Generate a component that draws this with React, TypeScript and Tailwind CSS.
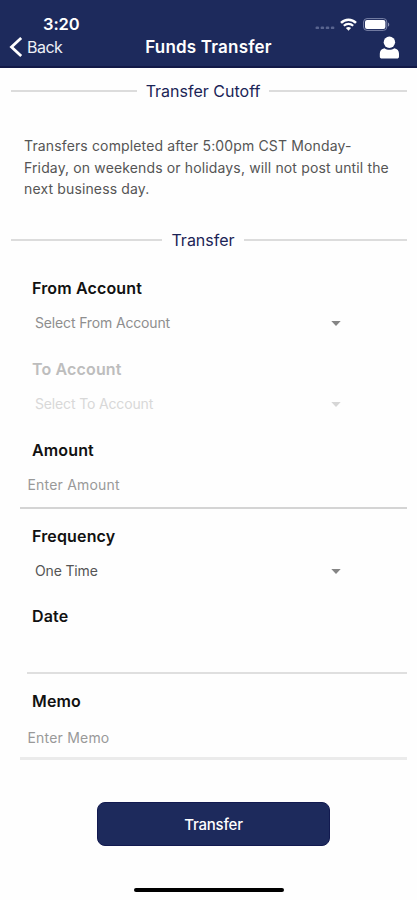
import type { ReactNode } from "react"
import { clsx } from "clsx"

const NOTICE_LINES = [
  "Transfers completed after 5:00pm CST Monday-",
  "Friday, on weekends or holidays, will not post until the",
  "next business day.",
]

function StatusBar() {
  return (
    <div className="flex h-8 items-end justify-between pr-[27px] pl-[43px]">
      <span className="text-[16.5px] leading-4 font-semibold tracking-[-0.1px]">3:20</span>
      <div className="flex h-4 items-center">
        <svg width="20" height="4" viewBox="0 0 20 4" className="mt-2 mr-[5px]" fill="#59648f">
          <rect x="0.5" y="0.5" width="3.6" height="2.6" rx="1.2" />
          <rect x="5.6" y="0.5" width="3.6" height="2.6" rx="1.2" />
          <rect x="10.7" y="0.5" width="3.6" height="2.6" rx="1.2" />
          <rect x="15.8" y="0.5" width="3.6" height="2.6" rx="1.2" />
        </svg>
        <svg width="17" height="13" viewBox="0 0 17 13" fill="none" stroke="#fff" strokeWidth="2.5">
          <path d="M1 4.9C5.2 0.7 11.8 0.7 16 4.9" />
          <path d="M3.8 7.8c2.7-2.6 6.7-2.6 9.4 0" strokeWidth="2.1" />
          <path d="M8.5 12.7 5.9 10c1.5-1.3 3.7-1.3 5.2 0z" fill="#fff" stroke="none" />
        </svg>
        <svg width="27" height="13" viewBox="0 0 27 13" className="ml-[6px]">
          <rect x="0.6" y="0.6" width="23.2" height="11.8" rx="3.4" fill="none" stroke="#7b84a8" />
          <rect x="2" y="2" width="20.4" height="9" rx="2" fill="#fff" />
          <path d="M25 4.4c1.7.6 1.7 3.6 0 4.2z" fill="#8d95b4" />
        </svg>
      </div>
    </div>
  )
}

function NavBar() {
  return (
    <div className="grid h-[30px] grid-cols-[110px_1fr_110px] items-center">
      <button className="flex items-center gap-1 pl-[9px] text-[16px] tracking-[-0.5px] text-[#eef0f6]">
        <svg width="14" height="20" viewBox="0 0 14 20" fill="none" stroke="#fff" strokeWidth="2.8">
          <path d="M12.2 1 2.5 10l9.7 9" />
        </svg>
        Back
      </button>
      <h1 className="pt-[2px] text-center text-[17px] font-semibold tracking-[0.2px]">
        Funds Transfer
      </h1>
      <button className="flex justify-end pr-[17px]" aria-label="Profile">
        <svg width="21" height="23" viewBox="0 0 21 23" fill="#fff">
          <circle cx="10.4" cy="6.2" r="5.7" />
          <path d="M5.500 12.200c2.800 2 7 2 9.800 0 3 .4 4.700 2.700 4.700 5.600v2.600c0 1.400-.8 2.100-2.200 2.100H3c-1.400 0-2.200-.7-2.200-2.100v-2.600c0-2.900 1.700-5.200 4.700-5.600z" />
        </svg>
      </button>
    </div>
  )
}

// The title sits slightly left of centre, so the right rule gets the extra width.
function SectionTitle({ children }: { children: ReactNode }) {
  return (
    <div className="flex h-6 items-center gap-[9px] pr-[10px] pl-[11px] text-[16px] text-[#1b2456]">
      <span className="h-[2px] grow basis-0 bg-[#dcdcdc]" />
      <h2>{children}</h2>
      <span className="h-[2px] grow basis-3 bg-[#dcdcdc]" />
    </div>
  )
}

function FieldLabel({ children, disabled }: { children: ReactNode; disabled?: boolean }) {
  return (
    <div
      className={clsx(
        "h-6 pt-px pl-8 text-[16px] leading-6 font-semibold tracking-[0.15px]",
        disabled ? "text-[#bdbdbd]" : "text-[#111]",
      )}
    >
      {children}
    </div>
  )
}

function Select({ value, tone }: { value: string; tone: "placeholder" | "disabled" | "filled" }) {
  return (
    <div
      className={clsx(
        "mt-[13px] flex h-5 items-center justify-between pr-[76px] pl-[35px] text-[14px] tracking-[-0.15px]",
        tone === "placeholder" && "text-[#8e8e8e]",
        tone === "disabled" && "text-[#d8d8d8]",
        tone === "filled" && "text-[#555]",
      )}
    >
      <span>{value}</span>
      <svg
        width="10"
        height="5"
        viewBox="0 0 10 5"
        className="mt-[3px]"
        fill={tone === "disabled" ? "#d6d6d6" : "#858585"}
      >
        <path d="M0.300 0h9.400L5 5z" />
      </svg>
    </div>
  )
}

export default function App() {
  return (
    <main className="flex h-[900px] w-[417px] flex-col bg-[#fefefe] font-['Inter',sans-serif]">
      <header className="h-[68px] border-b-2 border-[#121947] bg-[#1d2a5c] text-white">
        <StatusBar />
        <NavBar />
      </header>

      <section className="pt-[11px]">
        <SectionTitle>Transfer Cutoff</SectionTitle>
        <p className="mt-8 pl-6 text-[14px] leading-[21.5px] tracking-[0.14px] whitespace-nowrap text-[#555]">
          {NOTICE_LINES.map((line) => (
            <span key={line} className="block">
              {line}
            </span>
          ))}
        </p>
      </section>

      <section className="pt-[28.5px]">
        <SectionTitle>Transfer</SectionTitle>

        <div className="mt-[23px]">
          <FieldLabel>From Account</FieldLabel>
          <Select value="Select From Account" tone="placeholder" />
        </div>
        <div className="mt-6">
          <FieldLabel disabled>To Account</FieldLabel>
          <Select value="Select To Account" tone="disabled" />
        </div>
        <div className="mt-6">
          <FieldLabel>Amount</FieldLabel>
          <div className="mr-[10px] ml-5 h-12 border-b-2 border-[#d4d4d4] pt-[14px] pl-[7.5px] text-[14px] leading-5 tracking-[0.2px] text-[#999]">
            Enter Amount
          </div>
        </div>
        <div className="mt-[14px]">
          <FieldLabel>Frequency</FieldLabel>
          <Select value="One Time" tone="filled" />
        </div>
        <div className="mt-[23px]">
          <FieldLabel>Date</FieldLabel>
          <div className="mr-[10px] ml-[27px] h-[47px] border-b-2 border-[#dfdfdf]" />
        </div>
        <div className="mt-[14px]">
          <FieldLabel>Memo</FieldLabel>
          <div className="mr-[10px] ml-5 h-12 border-b-3 border-[#ebebeb] pt-4 pl-[7.5px] text-[14px] leading-5 tracking-[0.2px] text-[#999]">
            Enter Memo
          </div>
        </div>
      </section>

      <button className="mt-[42px] ml-[97px] h-[44px] w-[233px] rounded-[8px] border border-[#121a50] bg-[#1d2a5c] pt-[3px] text-[15px] font-medium tracking-[-0.2px] text-white">
        Transfer
      </button>
      <div className="mt-[42px] ml-[134px] h-[4px] w-[150px] rounded-full bg-black" />
    </main>
  )
}
